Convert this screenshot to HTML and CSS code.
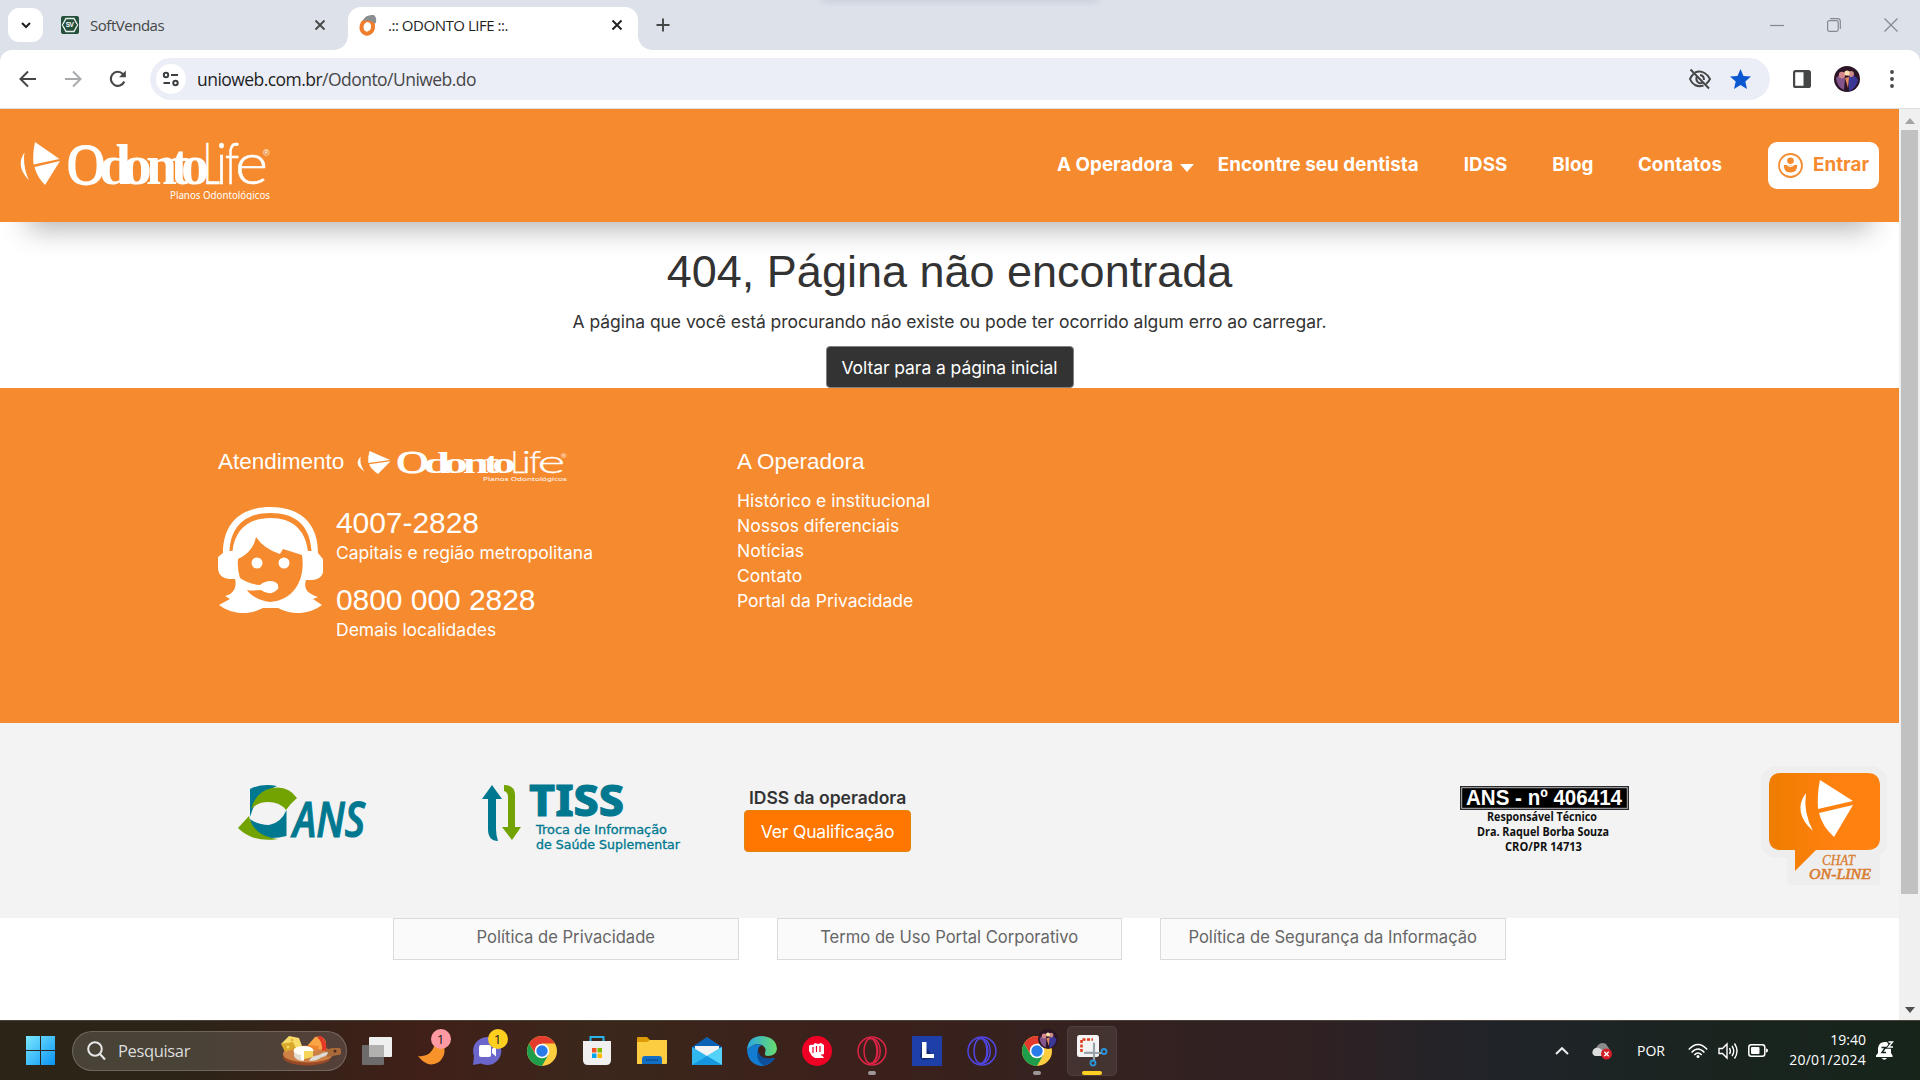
FILE: index.html
```html
<!DOCTYPE html>
<html lang="pt-BR">
<head>
<meta charset="utf-8">
<title>.:: ODONTO LIFE ::.</title>
<link rel="stylesheet" href="styles.css">
</head>
<body>
<svg class="defs" width="0" height="0" aria-hidden="true">
  <symbol id="logo" viewBox="0 0 250 58" preserveAspectRatio="none">
    <g fill="#fff">
      <path d="M4.500 10.500Q-5 24 9 38.500Q2.500 24 4.500 10.500Z"/>
      <path d="M15 0L39.500 17L13.500 22.500Q12.500 11 15 0Z"/>
      <path d="M14.500 25L40 19L25 43Q17 35 14.500 25Z"/>
      <g font-family="Liberation Serif, serif" font-size="57" font-weight="bold">
        <text x="47" y="41.500" font-size="58" font-weight="400" textLength="38" lengthAdjust="spacingAndGlyphs" stroke="#fff" stroke-width="1.800">O</text>
        <text x="79" y="42" textLength="32" lengthAdjust="spacingAndGlyphs">d</text>
        <text x="102" y="42" textLength="30" lengthAdjust="spacingAndGlyphs">o</text>
        <text x="126" y="42" textLength="31" lengthAdjust="spacingAndGlyphs">n</text>
        <text x="151" y="42" textLength="18" lengthAdjust="spacingAndGlyphs">t</text>
        <text x="161" y="42" textLength="28" lengthAdjust="spacingAndGlyphs">o</text>
      </g>
      <g font-family="Lato, sans-serif" font-weight="300" font-size="57" stroke="#fff" stroke-width=".6">
        <text x="183" y="42" textLength="17" lengthAdjust="spacingAndGlyphs">L</text>
        <text x="196" y="42" textLength="11" lengthAdjust="spacingAndGlyphs">i</text>
        <text x="205" y="42" textLength="14" lengthAdjust="spacingAndGlyphs">f</text>
        <text x="215" y="42" textLength="33" lengthAdjust="spacingAndGlyphs">e</text>
      </g>
      <text x="243" y="14" font-family="Liberation Sans, sans-serif" font-size="9">®</text>
      <text x="150" y="57" font-family="Noto Sans, sans-serif" font-size="10.500" textLength="100" lengthAdjust="spacingAndGlyphs">Planos Odontológicos</text>
    </g>
  </symbol>
  <symbol id="chrome" viewBox="0 0 28 28">
    <circle cx="14" cy="14" r="14" fill="#ffcd40"/>
    <path d="M14 7H26.100A14 14 0 0 0 1.900 7L8 17Z" fill="#e33b2e"/>
    <path d="M1.900 7A14 14 0 0 0 14 28L20 17.500H8Z" fill="#1e9e4a"/>
    <circle cx="14" cy="14" r="6.800" fill="#fff"/>
    <circle cx="14" cy="14" r="5.300" fill="#2a7bea"/>
  </symbol>
  <symbol id="opera" viewBox="0 0 30 30">
    <g fill="none" stroke="currentColor" stroke-width="1.500">
      <circle cx="15" cy="15" r="14"/>
      <ellipse cx="13.500" cy="15" rx="6.500" ry="12.500"/>
      <path d="M15 2.500C26 4 26 26 15 27.500M17 5C22 9 22 21 17 25"/>
    </g>
  </symbol>
  <symbol id="avatar" viewBox="0 0 26 26">
    <circle cx="13" cy="13" r="13" fill="#2b1526"/>
    <path d="M2 12Q7 6 11 12L10 24Q3 21 2 12Z" fill="#84548c"/>
    <path d="M14 12Q20 6 24 14Q22 23 15 25Z" fill="#3b3796"/>
    <circle cx="8" cy="9" r="3.200" fill="#d5878b"/>
    <circle cx="17" cy="8" r="3" fill="#c88b87"/>
    <circle cx="13" cy="7" r="2.600" fill="#ffe2b0"/>
    <path d="M11 12L15 11L14 22Z" fill="#e7895b"/>
  </symbol>
</svg>

<div class="tabstrip">
  <span class="tab-search"><svg width="12" height="12" viewBox="0 0 12 12"><path d="M2 4L6 8L10 4" fill="none" stroke="#1f1f1f" stroke-width="2"/></svg></span>
  <div class="tab tab-idle">
    <svg width="18" height="18" viewBox="0 0 18 18"><rect width="18" height="18" rx="2" fill="#234f3b"/><path d="M5 2.500H13L16.500 9L13 15.500H5L1.500 9Z" fill="none" stroke="#e6efe9" stroke-width="1.400"/><path d="M2 9L5 6H13L16 9L13 12H5Z" fill="#234f3b"/><text x="4.700" y="11.300" font-family="Liberation Sans, sans-serif" font-size="6.500" font-weight="bold" fill="#fff">SV</text></svg>
    <span class="tab-title">SoftVendas</span>
    <svg class="x" width="12" height="12" viewBox="0 0 12 12"><path d="M1.500 1.500L10.500 10.500M10.500 1.500L1.500 10.500" stroke="#444746" stroke-width="1.800"/></svg>
  </div>
  <div class="tab tab-active">
    <svg width="18" height="22" viewBox="0 0 18 22"><ellipse cx="8.500" cy="13" rx="5.800" ry="6.800" fill="none" stroke="#f07d2c" stroke-width="4" transform="rotate(12 9 12)"/><path d="M4 7Q6 0 15 1Q19 5 16 10Q12 5 4 7Z" fill="#8c8f92"/></svg>
    <span class="tab-title">.:: ODONTO LIFE ::.</span>
    <svg class="x" width="12" height="12" viewBox="0 0 12 12"><path d="M1.500 1.500L10.500 10.500M10.500 1.500L1.500 10.500" stroke="#1f1f1f" stroke-width="1.900"/></svg>
  </div>
  <svg class="plus" width="14" height="14" viewBox="0 0 14 14"><path d="M7 .5V13.500M.5 7H13.500" stroke="#444746" stroke-width="1.900"/></svg>
  <div class="snap-edge"></div>
  <div class="winctl">
    <svg width="14" height="14" viewBox="0 0 14 14"><path d="M0 7.500H14" stroke="#85898e" stroke-width="1.200"/></svg>
    <svg width="14" height="14" viewBox="0 0 14 14" fill="none" stroke="#85898e" stroke-width="1.200"><rect x=".6" y="2.600" width="10.600" height="10.800" rx="1.800"/><path d="M3 .7H10.500Q13.300 .7 13.300 3.500V11"/></svg>
    <svg width="14" height="14" viewBox="0 0 14 14"><path d="M.5 .5L13.500 13.500M13.500 .5L.5 13.500" stroke="#85898e" stroke-width="1.200"/></svg>
  </div>
</div>

<div class="toolbar-wrap">
<div class="toolbar">
  <div class="navbtns">
    <svg width="20" height="20" viewBox="0 0 20 20" fill="none" stroke="#444746" stroke-width="2"><path d="M18 10H3M10 2.500L2.500 10L10 17.500"/></svg>
    <svg width="20" height="20" viewBox="0 0 20 20" fill="none" stroke="#a8aaac" stroke-width="2"><path d="M2 10H17M10 2.500L17.500 10L10 17.500"/></svg>
    <svg width="20" height="20" viewBox="0 0 20 20"><path d="M16.300 12.500A7 7 0 1 1 15 5.100L17 7.200" fill="none" stroke="#444746" stroke-width="2.100"/><path d="M17.800 1.500V8.300H11Z" fill="#444746"/></svg>
  </div>
  <div class="omnibox">
    <span class="site"><svg width="18" height="16" viewBox="0 0 18 16" fill="none" stroke="#3c4043" stroke-width="2"><circle cx="4" cy="4" r="2.200"/><path d="M9 4H16M1.500 12H8"/><circle cx="13.500" cy="12" r="2.200"/></svg></span>
    <span class="url"><b>unioweb.com.br</b>/Odonto/Uniweb.do</span>
    <svg class="eye" width="24" height="22" viewBox="0 0 24 22" fill="none" stroke="#444746" stroke-width="2"><path d="M7 4.500Q12 2.500 16.500 5Q20 7 22 11Q20.500 14 18 16M15.500 17.500Q11 19 7 17Q3.500 15 2 11Q3.200 8.300 5.500 6"/><path d="M8.600 9Q7.500 13 11 15Q13 15.500 14.500 14.500M12 7Q16 7.500 16 12M2.500 1.500L21 20.500"/></svg>
    <svg class="star" width="21" height="20" viewBox="0 0 21 20"><path d="M10.500 0L13.500 7L21 7.600L15.300 12.600L17 20L10.500 16L4 20L5.700 12.600L0 7.600L7.500 7Z" fill="#0b57d0"/></svg>
  </div>
  <svg class="panel" width="18" height="18" viewBox="0 0 18 18"><rect x="1.100" y="1.100" width="15.800" height="15.800" rx="1.500" fill="none" stroke="#444746" stroke-width="2.200"/><path d="M10.500 1H17V17H10.500Z" fill="#444746"/></svg>
  <svg class="avatar" width="26" height="26"><use href="#avatar"/></svg>
  <svg class="dots" width="4" height="18" viewBox="0 0 4 18" fill="#444746"><circle cx="2" cy="2" r="1.900"/><circle cx="2" cy="9" r="1.900"/><circle cx="2" cy="16" r="1.900"/></svg>
</div>
</div>

<div class="viewport">
  <div class="page">
    <header class="site-header">
      <svg class="brand" width="250" height="58"><use href="#logo" width="250" height="58"/></svg>
      <nav>
        <a>A Operadora</a><i class="caret"></i>
        <a class="n2">Encontre seu dentista</a>
        <a class="n3">IDSS</a>
        <a class="n4">Blog</a>
        <a class="n5">Contatos</a>
        <a class="login"><svg width="25" height="25" viewBox="0 0 25 25"><circle cx="12.500" cy="12.500" r="11.500" fill="none" stroke="#f68a2e" stroke-width="1.800"/><circle cx="12.500" cy="7.800" r="3.300" fill="#f68a2e"/><path d="M5.800 12H19.200Q19.500 19.500 12.500 19.500Q5.500 19.500 5.800 12Z" fill="#f68a2e"/><path d="M9 11.500Q12.500 15 16 11.500" fill="none" stroke="#fff" stroke-width="1.200"/></svg><span>Entrar</span></a>
      </nav>
    </header>
    <main class="notfound">
      <h1>404, Página não encontrada</h1>
      <p>A página que você está procurando não existe ou pode ter ocorrido algum erro ao carregar.</p>
      <a class="back">Voltar para a página inicial</a>
    </main>
    <section class="contact">
      <div class="support">
        <h4>Atendimento<svg width="210" height="31"><use href="#logo" width="210" height="31"/></svg></h4>
        <div class="phones">
          <svg width="105" height="106" viewBox="0 0 105 106" fill="#fff">
            <path d="M5 46C5 15 24 0 52.500 0S100 15 100 46L105 52V66Q102 73 94 73H88C85 82 90 87 100 90L95 92L104 98C92 107 75 109 60 101H45C30 109 13 107 1 98L12 92L7 89C16 87 19 80 17 72H11Q1 71 0 62V50Z"/>
            <path d="M11.500 44C13 18 28 6 52.500 6S92 18 93.500 44H90C87 22 74 11 52.500 11S17 22 14.500 44Z" fill="#f68a2e"/>
            <path d="M20 52Q35 45 38 30Q46 42 62 47L65 42L84 48C88 76 73 94 52 95C42 94 33 89 29 83Q34 84 43 83Q52 90 60 82Q62 74 51 74Q45 75 42 78Q30 77 22 71Q19 62 20 52Z" fill="#f68a2e"/>
            <circle cx="39" cy="56" r="5.500"/><circle cx="66" cy="56" r="5.500"/>
          </svg>
          <div class="numbers">
            <h3>4007-2828</h3><p>Capitais e região metropolitana</p>
            <h3>0800 000 2828</h3><p>Demais localidades</p>
          </div>
        </div>
      </div>
      <div class="links">
        <h4>A Operadora</h4>
        <a>Histórico e institucional</a><a>Nossos diferenciais</a><a>Notícias</a><a>Contato</a><a>Portal da Privacidade</a>
      </div>
    </section>
    <section class="seals">
      <svg class="ans" width="129" height="56" viewBox="0 0 129 56">
        <path d="M12 4Q24 -2 39 1Q18 9 12 32Z" fill="#007890"/>
        <path d="M13 24Q18 6 34 3Q50 0 59 13Q52 19 48 25Q42 17 30 17Q20 17 13 24Z" fill="#72a300"/>
        <path d="M48.500 25V51Q30 56 20 49Q13 43 12 34Q20 40 31 40Q43 38 48.500 25Z" fill="#007890"/>
        <path d="M11 31L0 43Q15 58 40 54Q15 51 11 31Z" fill="#72a300"/>
        <text x="55" y="51.500" font-family="Open Sans, sans-serif" font-size="48" font-weight="600" font-style="italic" fill="#007890" stroke="#007890" stroke-width="1.200" textLength="72" lengthAdjust="spacingAndGlyphs">ANS</text>
      </svg>
      <svg class="tiss" width="200" height="68" viewBox="0 0 200 68">
        <path d="M10 0L20 14H14V44Q14 50 16 56Q6 56 6 44V14H0Z" fill="#007890"/>
        <path d="M22 0Q33 0 33 10V42H39L30 55L20 42H26V12Q26 7 22 6Z" fill="#72a300"/>
        <text x="47" y="31" font-family="Noto Sans, sans-serif" font-size="43" font-weight="800" fill="#007890" stroke="#007890" textLength="95" lengthAdjust="spacingAndGlyphs">TISS</text>
        <g font-family="DejaVu Sans, sans-serif" font-size="12" fill="#007890" stroke="#007890" stroke-width=".3"><text x="54" y="49" textLength="131" lengthAdjust="spacingAndGlyphs">Troca de Informação</text><text x="54" y="64" textLength="144" lengthAdjust="spacingAndGlyphs">de Saúde Suplementar</text></g>
      </svg>
      <div class="idss"><strong>IDSS da operadora</strong><a>Ver Qualificação</a></div>
      <svg class="reg" width="169" height="70" viewBox="0 0 169 70">
        <rect width="169" height="24" fill="#2b2a2e"/><rect x="1.700" y="1.700" width="165.600" height="20.600" fill="#000" stroke="#b5b3b8"/>
        <text x="6" y="19" font-family="Liberation Sans, sans-serif" font-weight="bold" font-size="22" fill="#fff" textLength="156" lengthAdjust="spacingAndGlyphs">ANS - nº 406414</text>
        <g font-family="Open Sans, sans-serif" font-weight="bold" font-size="12" fill="#111"><text x="27" y="35" textLength="110" lengthAdjust="spacingAndGlyphs">Responsável Técnico</text><text x="17" y="50" textLength="132" lengthAdjust="spacingAndGlyphs">Dra. Raquel Borba Souza</text><text x="45" y="65" textLength="77" lengthAdjust="spacingAndGlyphs">CRO/PR 14713</text></g>
      </svg>
      <svg class="chat" width="126" height="120" viewBox="0 0 126 120">
        <defs><linearGradient id="cg"><stop offset="0" stop-color="#ee7d00"/><stop offset=".6" stop-color="#ff8110"/></linearGradient></defs>
        <rect width="126" height="92" rx="16" fill="#eee"/><rect x="26" y="85" width="93" height="34" rx="4" fill="#eee"/>
        <path d="M20 7H106Q119 7 119 20V72Q119 84 106 84H55L34 105V84H20Q8 84 8 72V20Q8 7 20 7Z" fill="url(#cg)"/>
        <g fill="#fff"><path d="M45 27Q31 46 52 65Q42 46 45 27Z"/><path d="M59 14L92 35L57 43Q56 28 59 14Z"/><path d="M58 47L92 39L73 71Q61 60 58 47Z"/></g>
        <g font-family="Liberation Serif, serif" font-style="italic" fill="#d97d30" stroke="#d97d30" stroke-width=".3"><text x="61" y="99" font-size="14" textLength="33" lengthAdjust="spacingAndGlyphs">CHAT</text><text x="48" y="112.500" font-size="15.500" textLength="62" lengthAdjust="spacingAndGlyphs" stroke-width=".6">ON-LINE</text></g>
      </svg>
    </section>
    <section class="policies">
      <a>Política de Privacidade</a><a>Termo de Uso Portal Corporativo</a><a>Política de Segurança da Informação</a>
    </section>
  </div>
  <div class="scrollbar">
    <svg width="12" height="6" viewBox="0 0 12 6"><path d="M1 6L6 0L11 6Z" fill="#a3a3a3"/></svg>
    <div class="thumb"></div>
    <svg class="down" width="12" height="6" viewBox="0 0 12 6"><path d="M1 0L6 6L11 0Z" fill="#505050"/></svg>
  </div>
</div>

<footer class="taskbar">
  <svg class="start" width="29" height="29" viewBox="0 0 29 29"><defs><linearGradient id="wg" x1="0" y1="0" x2="1" y2="1"><stop offset="0" stop-color="#7be9ff"/><stop offset="1" stop-color="#0a93f5"/></linearGradient></defs><path d="M0 0H14V14H0ZM15 0H29V14H15ZM0 15H14V29H0ZM15 15H29V29H15Z" fill="url(#wg)"/></svg>
  <div class="search">
    <svg width="19" height="20" viewBox="0 0 19 20" fill="none" stroke="#e8e8e8" stroke-width="2"><circle cx="8" cy="8" r="6.800"/><path d="M13 13L18 18.500"/></svg>
    <span>Pesquisar</span>
    <svg class="food" width="60" height="30" viewBox="0 0 60 30">
      <ellipse cx="26" cy="21" rx="24" ry="8.500" fill="#9a4a26"/><ellipse cx="27" cy="18" rx="25" ry="8.500" fill="#cd8146"/><path d="M44 14L51 12H58Q60 12 60 15V17Q60 19 57 19L46 21Z" fill="#a86a38"/><circle cx="54" cy="15" r="1.500" fill="#4e2d1a"/>
      <path d="M0 8L4 16L20 11L15 4Z" fill="#d9a92c"/><path d="M0 8L8 0L18 2L21 10L15 12L12 6Z" fill="#f7dc6a"/><circle cx="11" cy="4" r="1.400" fill="#dfb236"/><circle cx="7" cy="11" r="1.500" fill="#f5d75e"/>
      <path d="M27 9L34 1Q42 -1 45 6V14L36 13Z" fill="#f9a545"/><path d="M27 9L38 10L36 15L27 13Z" fill="#ef8430"/><path d="M40 0Q46 4 45.500 14L41 15Q42 6 36 1Z" fill="#e23a26"/>
      <path d="M13 14V20Q15 25 23 25V17Z" fill="#e2ddd0"/><ellipse cx="22.500" cy="14.500" rx="10" ry="4.500" fill="#fffdf4"/><path d="M23 15L32 15V21L23 23Z" fill="#f5d65b"/><path d="M23 15V24H20V15Z" fill="#fff"/><path d="M28 25Q30 20 38 19Q42 16 47 16Q47 20 40 21.500Q36 25 28 25Z" fill="#dddad8"/>
    </svg>
  </div>
  <div class="apps">
    <span><svg width="30" height="28" viewBox="0 0 30 28"><rect x="7" width="23" height="20" rx="1" fill="#efefef"/><rect y="8" width="22" height="20" rx="1" fill="#6d6b6b"/><rect x="7" y="8" width="15" height="12" fill="#b3b1b0"/></svg></span>
    <span><svg width="30" height="30" viewBox="0 0 30 30"><path d="M24 3Q32 17 22 26Q11 33 1 20Q14 22 18 8Z" fill="#f7932a"/></svg><b class="badge pink">1</b></span>
    <span><svg width="30" height="30" viewBox="0 0 30 30"><path d="M15 1A14 14 0 1 1 9 27.500L1 29L2 20A14 14 0 0 1 15 1Z" fill="#6a66cc"/><rect x="7" y="9" width="12" height="12" rx="2" fill="#fff"/><path d="M20 13L24 9.500V20.500L20 17Z" fill="#fff"/></svg><b class="badge gold">1</b></span>
    <span><svg width="30" height="30"><use href="#chrome"/></svg></span>
    <span><svg width="28" height="29" viewBox="0 0 28 29"><path d="M7.500 6V1H20.500V6" fill="none" stroke="#29b5ec" stroke-width="2"/><path d="M0 5H28V24Q28 29 23 29H5Q0 29 0 24Z" fill="#f0f0f0"/><path d="M9 12H13.500V16.500H9Z" fill="#f25022"/><path d="M14.500 12H19V16.500H14.500Z" fill="#7fba00"/><path d="M9 17.500H13.500V22H9Z" fill="#00a4ef"/><path d="M14.500 17.500H19V22H14.500Z" fill="#ffb900"/></svg></span>
    <span><svg width="30" height="27" viewBox="0 0 30 27"><path d="M0 1Q0 0 1 0H10L13 3V10H0Z" fill="#dc9a06"/><path d="M0 5H10L13 3H30V26Q30 27 29 27H0Z" fill="#fdcd41"/><path d="M5 27V22Q5 19 8 19H22Q25 19 25 22V27Z" fill="#1270c4"/><path d="M9 23H21" stroke="#0a4a8c" stroke-width="1.200"/></svg></span>
    <span><svg width="30" height="28" viewBox="0 0 30 28"><path d="M0 10L15 0L30 10V18H0Z" fill="#0b62b4"/><path d="M3 9H27V16L15 22L3 16Z" fill="#f3f3f3"/><path d="M0 10L15 19L30 10V28H0Z" fill="#31b7f0"/><path d="M30 10V28L15 19Z" fill="#55d2f7"/><path d="M0 28L15 19L30 28Z" fill="#1596de"/></svg></span>
    <span><svg width="30" height="30" viewBox="0 0 30 30"><defs><linearGradient id="eg"><stop offset="0" stop-color="#2aa6e4"/><stop offset="1" stop-color="#68dd6c"/></linearGradient></defs><path d="M0 14Q1 0 15 0Q29 1 30 13Q29 20 21 20Q17 20 18 17Q20 12 15 9Q7 6 0 14Z" fill="url(#eg)"/><path d="M0 14Q7 6 15 9Q10 11 11 17Q14 25 28 22Q23 30 14 30Q1 28 0 14Z" fill="#137bd0"/><path d="M11 15Q8 23 16 29.500Q24 29 28 22Q14 25 11 15Z" fill="#0c4f9c"/></svg></span>
    <span><svg width="30" height="30" viewBox="0 0 30 30"><circle cx="15" cy="15" r="15" fill="#f00024"/><path d="M7 10Q8 8 11 9L13 7L16 8L19 7L22 9V18L20 19L22 22L13 22L10 20L7 15Z" fill="#fff"/><path d="M11 11V17M14.500 10V16M18 10V16M19 19H22" stroke="#f00024" stroke-width="1.200"/></svg></span>
    <span class="run"><svg width="30" height="30" color="#dd2446"><use href="#opera"/></svg></span>
    <span><svg width="30" height="30" viewBox="0 0 30 30"><path d="M0 0H30V30H0Z" fill="#1e3ea8"/><path d="M10 6L8 21L11 24L22 22Z" fill="#11276f"/><path d="M10 6H14.500V18H22V22H10Z" fill="#fff"/></svg></span>
    <span><svg width="30" height="30" color="#5046e4"><use href="#opera"/></svg></span>
    <span class="run"><svg width="30" height="30"><use href="#chrome"/></svg><svg class="mini" width="20" height="20"><use href="#avatar" width="20" height="20"/></svg></span>
    <span class="current"><svg width="30" height="31" viewBox="0 0 30 31"><rect width="22" height="22" rx="2.500" fill="#f4f4f4"/><path d="M4.500 17V4.500H16" fill="none" stroke="#dc3a1a" stroke-width="2.500" stroke-dasharray="3 1.500"/><path d="M8 17H17V7" fill="none" stroke="#c9ced3" stroke-width="1.500"/><path d="M17 8V25M7 18H25" stroke="#9ba3aa" stroke-width="2.200"/><g fill="none" stroke="#2b95dc" stroke-width="1.800"><circle cx="27" cy="16.500" r="2.500"/><circle cx="16" cy="28" r="2.500"/></g></svg></span>
  </div>
  <div class="tray">
    <svg width="14" height="8" viewBox="0 0 14 8"><path d="M1 7L7 1.200L13 7" fill="none" stroke="#eee" stroke-width="2"/></svg>
    <svg class="cloud" width="20" height="18" viewBox="0 0 20 18"><path d="M4 6Q8 -1 14 2L18 8L14 13H4Z" fill="#8b8b8b"/><path d="M3 14Q-1 12 1 8Q3 5 7 6Q12 8 12 14Z" fill="#dcdcdc"/><circle cx="14.500" cy="12" r="5.500" fill="#d51e28"/><path d="M12.300 9.800L16.700 14.200M16.700 9.800L12.300 14.200" stroke="#fff" stroke-width="1.400"/></svg>
    <span class="lang">POR</span>
    <svg class="wifi" width="20" height="16" viewBox="0 0 20 16" fill="none" stroke="#fff" stroke-width="1.500"><path d="M.8 6.500Q10 -3.500 19.200 6.500M3.600 9.500Q10 2.500 16.400 9.500M6.300 12Q10 8 13.700 12"/><circle cx="10" cy="13.500" r="1.500" fill="#fff" stroke="none"/></svg>
    <svg class="vol" width="20" height="18" viewBox="0 0 20 18" fill="none" stroke="#fff" stroke-width="1.400"><path d="M1 6.500H4.500L9 2V16L4.500 11.500H1ZM11.500 6Q13.300 9 11.500 12M14 4Q17.500 9 14 14M16.500 1.500Q21.500 9 16.500 16.500"/></svg>
    <svg class="bat" width="20" height="13" viewBox="0 0 20 13"><rect x=".8" y=".8" width="16" height="11.400" rx="2.500" fill="none" stroke="#fff" stroke-width="1.500"/><rect x="3" y="3" width="8.500" height="7" rx="1" fill="#fff"/><path d="M18 4.500Q20 4.500 20 6.500Q20 8.500 18 8.500Z" fill="#fff"/></svg>
    <div class="clock"><span>19:40</span><span class="date">20/01/2024</span></div>
    <svg class="bell" width="18" height="20" viewBox="0 0 18 20"><path d="M0 16V14.500L2 12V7Q3 1 8.500 1H11L15 8V12L16.500 14.500V16ZM5.500 17H11Q8.500 20.500 5.500 17Z" fill="#fff"/><path d="M12.500 1H16.500L12.500 6H17" fill="none" stroke="#16241e" stroke-width="3.400"/><path d="M5.500 6.500H9.500L6 11.500H10" fill="none" stroke="#16241e" stroke-width="1.500"/><path d="M12.500 1H16.500L12.500 6H17" fill="none" stroke="#fff" stroke-width="1.400"/></svg>
  </div>
</footer>
</body>
</html>
```

FILE: styles.css
```css
* { box-sizing: border-box; }
body { margin: 0; width: 1920px; height: 1080px; overflow: hidden; display: flex; flex-direction: column; background: #fff; font-family: Inter, sans-serif; color: #333; }
svg { display: block; flex: none; overflow: visible; }
svg.defs { display: none; }
h1, h3, h4, p { margin: 0; font-weight: 400; }
a { color: inherit; text-decoration: none; white-space: nowrap; }

/* Browser chrome */
.tabstrip { height: 50px; flex: none; background: #dde1e9; display: flex; align-items: center; font: 15px "Open Sans", sans-serif; letter-spacing: -.47px; color: #1f1f1f; position: relative; }
.tab-search { width: 35px; height: 34px; margin-left: 8px; border-radius: 11px; background: #fff; display: flex; align-items: center; justify-content: center; }
.tab { display: flex; align-items: center; height: 43px; margin-top: 7px; padding-bottom: 7px; white-space: nowrap; }
.tab-title { margin-left: 11px; padding-bottom: 1px; }
.tab .x { margin-left: auto; }
.tab-idle { width: 305px; padding-left: 18px; padding-right: 22px; color: #444746; }
.tab-active { width: 290px; padding-left: 11px; padding-right: 15px; background: #fff; border-radius: 13px 13px 0 0; position: relative; }
.tab-active::before, .tab-active::after { content: ""; position: absolute; bottom: 0; width: 14px; height: 14px; }
.tab-active::before { left: -14px; background: radial-gradient(circle at 0 0, transparent 13.5px, #fff 14px); }
.tab-active::after { right: -14px; background: radial-gradient(circle at 100% 0, transparent 13.5px, #fff 14px); }
.plus { margin-left: 17.5px; }
.snap-edge { position: absolute; left: 822px; top: -6px; width: 276px; height: 6px; border-radius: 6px; box-shadow: 0 1px 6px rgba(90, 100, 125, .2); }
.winctl { margin-left: auto; margin-right: 22px; display: flex; gap: 43px; }

.toolbar-wrap { flex: none; background: #dde1e9; }
.toolbar { height: 59px; background: #fff; border-bottom: 1px solid #dcdfe3; border-radius: 12px 12px 0 0; display: flex; align-items: center; }
.navbtns { display: flex; gap: 25px; margin-left: 18px; }
.omnibox { margin-left: 22px; width: 1620px; height: 42px; border-radius: 21px; background: #ebeef7; display: flex; align-items: center; padding-left: 6px; padding-right: 19px; }
.site { width: 30px; height: 30px; border-radius: 50%; background: #fff; display: flex; align-items: center; justify-content: center; }
.url { margin-left: 11px; font: 17.5px "Open Sans", sans-serif; letter-spacing: -.54px; color: #474747; }
.url b { font-weight: 400; color: #1f1f1f; }
.eye { margin-left: auto; }
.star { margin-left: 18px; }
.panel { margin-left: 23px; }
.avatar { margin-left: 23px; }
.dots { margin-left: 30px; }

.viewport { flex: 1; display: flex; min-height: 0; }
.page { width: 1899px; font-size: 17.5px; line-height: 25px; }
.scrollbar { width: 21px; background: #f0f0f0; display: flex; flex-direction: column; align-items: center; padding: 9px 0 7px; }
.thumb { width: 17px; height: 764px; margin-top: 6px; background: #c1c1c1; }
.scrollbar .down { margin-top: auto; }

/* Site header */
.site-header { height: 113px; background: #f68a2e; display: flex; align-items: flex-start; padding: 33px 20px 0; box-shadow: 0 35px 28px -28px rgba(0, 0, 0, .3); position: relative; }
.brand { margin-left: -.5px; }
nav { margin-left: auto; height: 47px; display: flex; align-items: center; color: #fff; font-weight: 700; font-size: 18.75px; letter-spacing: .06px; }
nav > a:not(.login), .login span { padding-bottom: 2px; }
.caret { border: 7.5px solid transparent; border-top: 8px solid #fff; border-bottom: 0; margin: 5px 23.5px 0 7px; }
.n2, .n3 { margin-right: 45px; }
.n4 { margin-right: 44.5px; }
.n5 { margin-right: 46px; }
.login { width: 111px; height: 47px; border-radius: 9px; background: #fff; color: #f68a2e; display: flex; align-items: center; gap: 10px; padding-left: 10px; }

/* Error message */
.notfound { height: 166px; display: flex; flex-direction: column; align-items: center; padding-top: 25px; }
h1 { font: 45px/49.5px "Liberation Sans", sans-serif; margin-bottom: 12.5px; }
.notfound p { margin-bottom: 12px; letter-spacing: -.045px; }
.back { height: 42px; width: 248px; background: #333; color: #fff; border: 1px solid #808080; border-radius: 4px; text-align: center; line-height: 42px; letter-spacing: -.07px; }

/* Contact block */
.contact { height: 335px; background: #f68a2e; color: #fff; display: flex; padding: 61px 0 0 218px; }
.contact h4 { font: 22.5px/25px "Liberation Sans", sans-serif; display: flex; }
.support { width: 519px; }
.support h4 { gap: 13px; height: 25px; }
.support h4 svg { margin-top: 2px; }
.phones { display: flex; gap: 13px; margin-top: 33px; }
.numbers { margin-top: -1px; }
.numbers h3 { font: 30px/33px "Liberation Sans", sans-serif; letter-spacing: -.06px; }
.numbers p { padding-top: 1px; margin-bottom: 18px; }
.links { display: flex; flex-direction: column; }
.links h4 { margin-bottom: 14px; }

/* Certification seals */
.seals { height: 195px; background: #f3f3f3; display: flex; align-items: flex-start; padding-left: 238px; }
.ans { margin-top: 62px; }
.tiss { margin: 62px 0 0 115px; }
.idss { margin: 62px 0 0 62px; display: flex; flex-direction: column; width: 167px; }
.idss strong { font-weight: 600; padding-left: 5px; }
.idss a { height: 42px; border-radius: 4px; background: #ff7600; border: 1px solid #e0860c; color: #fff; text-align: center; line-height: 42px; letter-spacing: -.15px; }
.reg { margin: 63px 0 0 549px; }
.chat { margin: 43px 0 0 132px; }
.policies { display: flex; gap: 38px; padding-left: 393px; }
.policies a { width: 345.5px; height: 42px; background: #fafafa; border: 1px solid #dadada; text-align: center; font-size: 16.6px; line-height: 36px; color: #666; }

/* Taskbar */
.taskbar { height: 60px; flex: none; display: flex; align-items: center; background: linear-gradient(90deg, #2b2417 0, #2b2417 9%, #402019 22%, #3b271b 31%, #3b201b 45%, #35221f 55%, #302123 68%, #20242a 78%, #1a2420 88%, #16241a 100%); border-top: 1px solid #4a4238; color: #fff; font-family: "Open Sans", sans-serif; }
.start { margin-left: 26px; }
.search { margin-left: 17px; width: 275px; height: 40px; border-radius: 20px; background: rgba(255, 255, 255, .14); border: 1px solid rgba(255, 255, 255, .2); display: flex; align-items: center; padding: 0 5px 0 14px; font-size: 16.5px; letter-spacing: -.35px; color: #ddd; }
.search span { margin-left: 12px; }
.food { margin-left: auto; }
.apps { display: flex; margin-left: 2.5px; height: 50px; }
.apps > span { width: 55px; display: flex; align-items: center; justify-content: center; position: relative; }
.badge { position: absolute; top: 3px; left: 26px; width: 20px; height: 20px; border-radius: 50%; color: #222; font-weight: 400; font-size: 13.5px; line-height: 20px; text-align: center; }
.pink { background: #ff9aa2; }
.gold { background: #ffcf1f; left: 28px; }
.mini { position: absolute; left: 28px; top: 3px; }
.run::after, .current::after { content: ""; position: absolute; bottom: 1px; width: 8px; height: 4px; border-radius: 2px; background: #9c9696; }
.apps > .current { width: 50px; margin-left: 2.5px; background: rgba(255, 255, 255, .08); border-radius: 5px; box-shadow: inset 0 0 0 1px rgba(255, 255, 255, .06); }
.current::after { width: 20px; background: #ffcf24; }
.tray { margin-left: auto; margin-right: 26px; display: flex; align-items: center; font-size: 14px; }
.cloud { margin-left: 23px; }
.lang { margin-left: 25px; padding-bottom: 1px; }
.wifi { margin-left: 23px; }
.vol { margin-left: 10px; }
.bat { margin-left: 10px; }
.clock { width: 98px; display: flex; flex-direction: column; align-items: flex-end; line-height: 20px; padding-bottom: 2px; }
.date { letter-spacing: .25px; }
.bell { margin-left: 10px; }
```
